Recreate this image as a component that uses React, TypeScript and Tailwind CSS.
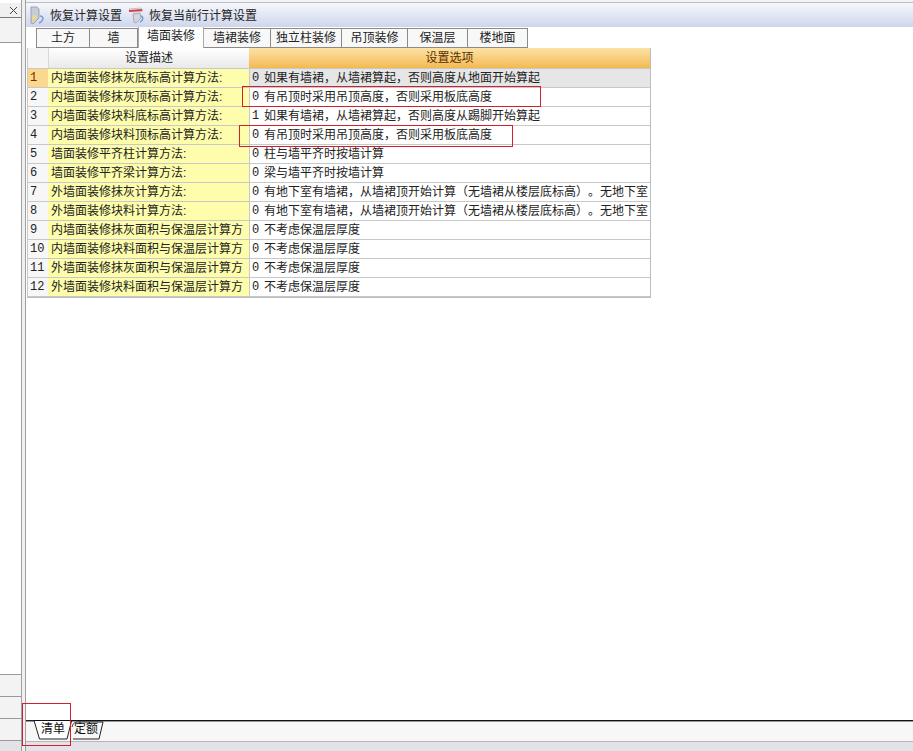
const font = "font-['Liberation_Sans','Noto_Sans_CJK_SC',sans-serif]";

const topTabs = [
  { name: "土方", width: "w-[54px]" },
  { name: "墙", width: "w-[48px]" },
  { name: "墙面装修", width: "w-[66px]", active: true },
  { name: "墙裙装修", width: "w-[67px]" },
  { name: "独立柱装修", width: "w-[71px]" },
  { name: "吊顶装修", width: "w-[66px]" },
  { name: "保温层", width: "w-[60px]" },
  { name: "楼地面", width: "w-[60px]" },
];

const longText = "有地下室有墙裙，从墙裙顶开始计算（无墙裙从楼层底标高）。无地下室";
const noInsulation = "不考虑保温层厚度";
const ceilingText = "有吊顶时采用吊顶高度，否则采用板底高度";

const rows = [
  { desc: "内墙面装修抹灰底标高计算方法:", val: "0", text: "如果有墙裙，从墙裙算起，否则高度从地面开始算起" },
  { desc: "内墙面装修抹灰顶标高计算方法:", val: "0", text: ceilingText },
  { desc: "内墙面装修块料底标高计算方法:", val: "1", text: "如果有墙裙，从墙裙算起，否则高度从踢脚开始算起" },
  { desc: "内墙面装修块料顶标高计算方法:", val: "0", text: ceilingText },
  { desc: "墙面装修平齐柱计算方法:", val: "0", text: "柱与墙平齐时按墙计算" },
  { desc: "墙面装修平齐梁计算方法:", val: "0", text: "梁与墙平齐时按墙计算" },
  { desc: "外墙面装修抹灰计算方法:", val: "0", text: longText },
  { desc: "外墙面装修块料计算方法:", val: "0", text: longText },
  { desc: "内墙面装修抹灰面积与保温层计算方", val: "0", text: noInsulation },
  { desc: "内墙面装修块料面积与保温层计算方", val: "0", text: noInsulation },
  { desc: "外墙面装修抹灰面积与保温层计算方", val: "0", text: noInsulation },
  { desc: "外墙面装修块料面积与保温层计算方", val: "0", text: noInsulation },
];

function RestoreIcon() {
  return (
    <svg width="18" height="19" viewBox="0 0 18 19" className="shrink-0">
      <path d="M3 1h6l2 2v9l-6 6-2-1z" fill="#c9ccd6" stroke="#8f93a3" strokeWidth="0.8" />
      <path d="M4 10l4-1 1 3-5 5z" fill="#e3d9a0" />
      <path d="M12 10c4 0 4 5-1 7" fill="none" stroke="#7f9ad6" strokeWidth="1.6" />
    </svg>
  );
}

function RestoreRowIcon() {
  return (
    <svg width="19" height="19" viewBox="0 0 19 19" className="shrink-0">
      <path d="M2 3l12-1 2 3-11 1z" fill="#f4f4f6" stroke="#b0b0b8" strokeWidth="0.7" />
      <path d="M2 5l13-1" stroke="#d8413f" strokeWidth="2" />
      <path d="M6 8l7-1 1 5-5 5-2-1z" fill="#d3d6e0" stroke="#8f93a3" strokeWidth="0.7" />
      <path d="M14 10c3 1 2 5-1 6" fill="none" stroke="#7f9ad6" strokeWidth="1.5" />
    </svg>
  );
}

function BottomTab({ label, active }: { label: string; active?: boolean }) {
  return (
    <div className={active ? "relative -mr-[1px] h-[21px] w-[45px]" : "relative h-[21px] w-[34px]"}>
      {active ? (
        <svg width="46" height="21" viewBox="0 0 46 21" className="absolute left-0 top-0">
          <path d="M0 0.5H8L13.500 19H41L45.500 1" fill="#ffffff" stroke="#222222" strokeWidth="1" />
        </svg>
      ) : (
        <svg width="34" height="21" viewBox="0 0 34 21" className="absolute left-0 top-0">
          <path d="M2 7C3 3 5 2 8 2H33L29 19H3" fill="#f7f7f8" stroke="#222222" strokeWidth="1" />
        </svg>
      )}
      <span className={active ? "absolute left-[15px] top-0 text-xs leading-[18px] text-[#111]" : "absolute left-[4px] top-0 text-xs leading-[18px] text-[#111]"}>
        {label}
      </span>
    </div>
  );
}

export default function App() {
  return (
    <div className={`${font} relative flex h-[751px] w-[913px] overflow-hidden bg-white text-xs text-[#222] [text-spacing-trim:space-all]`}>
      {/* left docked panel */}
      <div className="flex h-full w-[21px] shrink-0 flex-col bg-white">
        <div className="h-[3px] bg-white" />
        <div className="flex h-[14px] items-center justify-end bg-[#f0f0f0] pr-[3px] text-[#333]">
          <svg width="9" height="9" viewBox="0 0 9 9">
            <path d="M1 1l7 7M8 1l-7 7" stroke="#444" strokeWidth="1" />
          </svg>
        </div>
        <div className="h-[1px] bg-[#777]" />
        <div className="h-[24px] bg-[#f3f3f3]" />
        <div className="h-[1px] bg-[#999]" />
        <div className="flex-1 bg-white" />
        <div className="h-[1px] bg-[#999]" />
        <div className="h-[21px] bg-[#f3f3f3]" />
        <div className="h-[1px] bg-[#999]" />
        <div className="h-[21px] bg-[#f3f3f3]" />
        <div className="h-[1px] bg-[#999]" />
        <div className="h-[21px] bg-[#f3f3f3]" />
        <div className="h-[1px] bg-[#999]" />
        <div className="h-[10px] bg-[#e2e2e8]" />
      </div>

      {/* splitter */}
      <div className="flex h-full w-[5px] shrink-0 flex-col border-x border-[#a0a0a0] bg-[#f0f0f0]" />

      {/* main */}
      <div className="flex h-full min-w-0 flex-1 flex-col">
        <div className="h-[2px] bg-[#f4f4f6]" />
        <div className="h-[1px] bg-[#b8bcc6]" />
        <div className="flex h-[24px] items-center bg-gradient-to-b from-[#f6f7fb] to-[#cfd6ec] pl-[2px] pt-[1px]">
          <RestoreIcon />
          <span className="ml-[4px] text-[#222]">恢复计算设置</span>
          <div className="ml-[5px]">
            <RestoreRowIcon />
          </div>
          <span className="ml-[3px] text-[#222]">恢复当前行计算设置</span>
        </div>

        <div className="flex h-[21px] items-end pl-[10px]">
          {topTabs.map((t) =>
            t.active ? (
              <div key={t.name} className={`${t.width} flex h-[21px] items-start justify-center border-x border-[#aaa] bg-white pt-[1px] leading-[16px]`}>
                {t.name}
              </div>
            ) : (
              <div key={t.name} className={`${t.width} flex h-[20px] items-center justify-center border-y border-r border-[#8a8a8a] bg-[#f8f8f8] leading-[16px] first:border-l`}>
                {t.name}
              </div>
            ),
          )}
        </div>

        {/* settings grid */}
        <div className="min-h-0 flex-1 pl-[1px]">
          <div className="w-[624px] border-r border-b border-[#bdbdbd]">
            <div className="flex h-[21px] border-b border-[#c8c8c8]">
              <div className="w-[21px] shrink-0 border-l border-[#c8c8c8] bg-[#f4f4f4]" />
              <div className="flex w-[201px] shrink-0 items-center justify-center border-l border-[#d8d8d8] bg-gradient-to-b from-[#ffffff] to-[#e9e9e9]">
                设置描述
              </div>
              <div className="flex flex-1 items-center justify-center bg-gradient-to-b from-[#fbe3a6] to-[#f4b94f] text-[#5a3000]">
                设置选项
              </div>
            </div>
            {rows.map((r, i) => (
              <div key={i} className="flex h-[19px] border-b border-[#c8c8c8]">
                <div
                  className={
                    i === 0
                      ? "flex w-[21px] shrink-0 items-center border-l border-[#c8c8c8] bg-[#fcd88e] pl-[2px] font-['Liberation_Mono',monospace] text-[#7a2a00]"
                      : "flex w-[21px] shrink-0 items-center border-l border-[#c8c8c8] bg-[#f7f7f7] pl-[2px] font-['Liberation_Mono',monospace]"
                  }
                >
                  {i + 1}
                </div>
                <div className="flex w-[201px] shrink-0 items-center whitespace-nowrap bg-[#fdfdac] pl-[3px]">
                  {r.desc}
                </div>
                <div
                  className={
                    i === 0
                      ? "flex min-w-0 flex-1 items-center whitespace-nowrap border-l border-[#c8c8c8] bg-[#e6e6e6] pl-[2px]"
                      : "flex min-w-0 flex-1 items-center whitespace-nowrap border-l border-[#c8c8c8] bg-white pl-[2px]"
                  }
                >
                  <span className="w-[12px] shrink-0 font-['Liberation_Mono',monospace]">{r.val}</span>
                  <span>{r.text}</span>
                </div>
              </div>
            ))}
          </div>
        </div>

        {/* sheet tabs */}
        <div className="h-[2px] border-t border-[#111] bg-[#999]" />
        <div className="flex h-[19px] bg-[#f7f7f8]">
          <div className="-mt-[2px] flex">
            <BottomTab label="清单" active />
            <BottomTab label="定额" />
          </div>
        </div>
        <div className="h-[1px] bg-[#b5b5bb]" />
        <div className="h-[9px] bg-[#e2e2e8]" />
      </div>

      {/* review annotations */}
      <div className="absolute left-[242px] top-[86px] h-[21px] w-[299px] border border-[#d0202c]" />
      <div className="absolute left-[239px] top-[125px] h-[22px] w-[274px] border border-[#d0202c]" />
      <div className="absolute left-[22px] top-[703px] h-[43px] w-[49px] border border-[#d0202c]" />
    </div>
  );
}
